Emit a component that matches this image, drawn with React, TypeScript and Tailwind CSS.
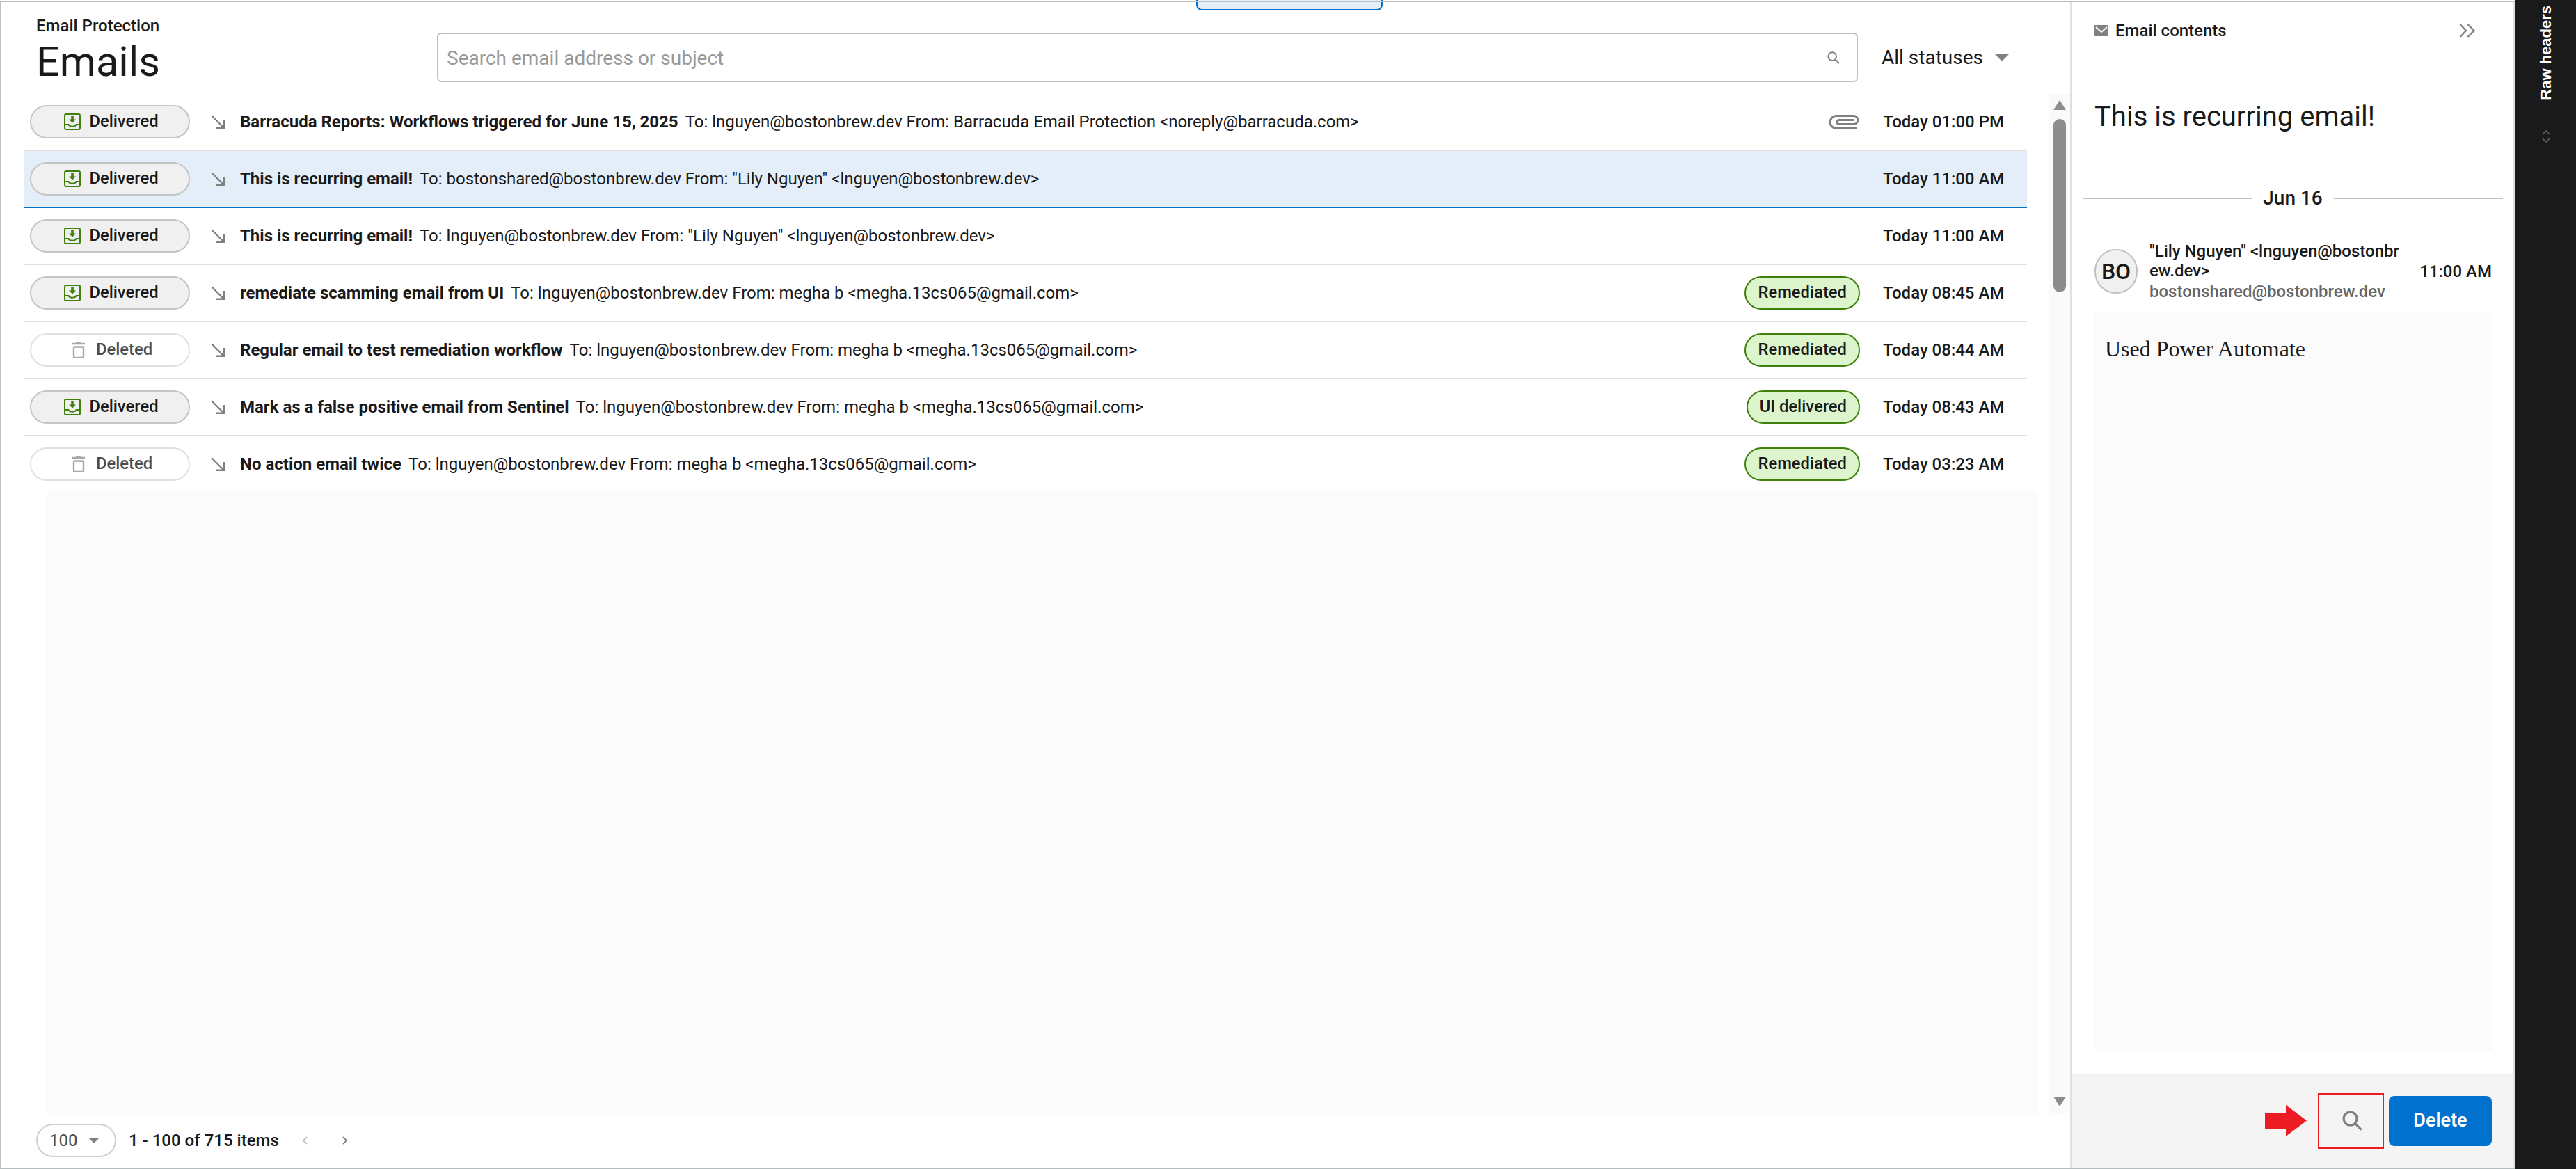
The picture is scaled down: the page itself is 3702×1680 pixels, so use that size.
const rows = [
  { status: "Delivered", subject: "Barracuda Reports: Workflows triggered for June 15, 2025", to: "lnguyen@bostonbrew.dev", from: "Barracuda Email Protection <noreply@barracuda.com>", time: "Today 01:00 PM", attachment: true },
  { status: "Delivered", subject: "This is recurring email!", to: "bostonshared@bostonbrew.dev", from: "\"Lily Nguyen\" <lnguyen@bostonbrew.dev>", time: "Today 11:00 AM", selected: true },
  { status: "Delivered", subject: "This is recurring email!", to: "lnguyen@bostonbrew.dev", from: "\"Lily Nguyen\" <lnguyen@bostonbrew.dev>", time: "Today 11:00 AM" },
  { status: "Delivered", subject: "remediate scamming email from UI", to: "lnguyen@bostonbrew.dev", from: "megha b <megha.13cs065@gmail.com>", tag: "Remediated", time: "Today 08:45 AM" },
  { status: "Deleted", subject: "Regular email to test remediation workflow", to: "lnguyen@bostonbrew.dev", from: "megha b <megha.13cs065@gmail.com>", tag: "Remediated", time: "Today 08:44 AM" },
  { status: "Delivered", subject: "Mark as a false positive email from Sentinel", to: "lnguyen@bostonbrew.dev", from: "megha b <megha.13cs065@gmail.com>", tag: "UI delivered", time: "Today 08:43 AM" },
  { status: "Deleted", subject: "No action email twice", to: "lnguyen@bostonbrew.dev", from: "megha b <megha.13cs065@gmail.com>", tag: "Remediated", time: "Today 03:23 AM" },
];

const SearchIcon = ({ className }: { className: string }) => (
  <svg viewBox="0 0 20 20" fill="none" stroke="currentColor" strokeWidth="2.2" className={className}>
    <circle cx="8" cy="8" r="6.5" />
    <path d="M12.8 12.8L19 19" />
  </svg>
);

const Caret = ({ className }: { className: string }) => (
  <svg viewBox="0 0 20 10" className={className}>
    <path d="M0 0H20L10 10Z" fill="#808080" />
  </svg>
);

const DeliveredIcon = () => (
  <svg viewBox="0 0 24 24" fill="none" className="w-6 h-6 shrink-0">
    <rect x="1" y="1" width="22" height="22" rx="2" stroke="#3f7f0b" strokeWidth="2" />
    <path d="M1 16H6.5C7.5 19.5 16.5 19.5 17.5 16H23" stroke="#3f7f0b" strokeWidth="2" />
    <path d="M10.2 4H13.8V8.5H17L12 13.5L7 8.5H10.2Z" fill="#3f7f0b" />
  </svg>
);

const TrashIcon = () => (
  <svg viewBox="0 0 18 24" fill="none" className="w-[18px] h-6 shrink-0">
    <path d="M0 3H18M5 1.5H13" stroke="#a8a8a8" strokeWidth="2.4" />
    <rect x="2" y="7.5" width="14" height="15.5" rx="1.5" stroke="#a8a8a8" strokeWidth="2.4" />
  </svg>
);

const StatusBadge = ({ status }: { status: string }) =>
  status === "Delivered" ? (
    <div className="w-[230px] h-12 shrink-0 flex items-center justify-center gap-3 rounded-full border-2 border-[#c4c4c4] bg-[#f0f0f0] pl-1 text-[#1a1a1a] text-[23.8px] font-medium">
      <DeliveredIcon />
      Delivered
    </div>
  ) : (
    <div className="w-[230px] h-12 shrink-0 flex items-center justify-center gap-4 rounded-full border-2 border-[#e0e0e0] bg-white pl-[7px] text-[#4d4d4d] text-[23.8px] font-medium">
      <TrashIcon />
      Deleted
    </div>
  );

const Row = ({ row, last }: { row: (typeof rows)[number]; last: boolean }) => (
  <div
    className={`flex items-center pl-2 pr-[33px] shrink-0 ${last ? "h-[80px]" : "h-[82px] border-b-2"} ${
      row.selected ? "bg-[#e4eef8] border-[#0072ce]" : "border-[#e0e0e0]"
    }`}
  >
    <StatusBadge status={row.status} />
    <svg viewBox="0 0 20 20" fill="none" stroke="#808080" strokeWidth="2.4" className="w-5 h-5 ml-[30px] shrink-0">
      <path d="M1 1L18 18M18.8 7V18.8H7" />
    </svg>
    <div className="ml-[22px] flex-1 min-w-0 text-[24px] text-[#1a1a1a] whitespace-pre truncate">
      <span className="font-bold">{row.subject}</span>
      <span className="ml-[10px]">To: {row.to} From: {row.from}</span>
    </div>
    {row.attachment && (
      <svg viewBox="0 0 44 21" fill="none" stroke="#808080" strokeWidth="3" className="w-11 h-[21px] mr-[34px] shrink-0">
        <path d="M40 19.5H11A9 9 0 0 1 11 1.5H36A6 6 0 0 1 36 13.5H15A3 3 0 0 1 15 7.5H37" />
      </svg>
    )}
    {row.tag && (
      <div className="h-12 mr-[33px] px-[17px] shrink-0 flex items-center justify-center rounded-full border-2 border-[#3f7f0b] bg-[#dcf5cc] text-[#1a1a1a] text-[23.8px] font-medium">
        {row.tag}
      </div>
    )}
    <div className="w-[174px] shrink-0 text-right text-[24px] font-medium text-[#1a1a1a] whitespace-nowrap">{row.time}</div>
  </div>
);

export default function App() {
  return (
    <div className="relative flex h-screen w-screen overflow-hidden bg-white font-['Roboto',sans-serif] text-[#1a1a1a]">
      {/* tab peeking in from the top, the page's top line runs over it */}
      <div className="absolute left-[1719px] top-0 w-[268px] h-[15px] rounded-b-[8px] border-2 border-t-0 border-[#0072ce] bg-[#e4eef8]" />
      <div className="relative z-10 w-[3615px] shrink-0 pt-px">
        <div className="flex h-full border-t-2 border-b-2 border-t-[#c0c0c0] border-b-[#b4bcbc]">
          <div className="w-[2975px] shrink-0 flex flex-col border-l-2 border-[#c0c0c0]">
            <header className="h-[132px] shrink-0 flex items-start pl-[50px]">
              <div className="w-[576px] shrink-0 pt-[21px]">
                <div className="text-[24px] leading-[26px] font-medium">Email Protection</div>
                <div className="mt-1 text-[59.5px] leading-[70px] font-normal">Emails</div>
              </div>
              <div className="mt-11 w-[2042px] h-[71px] shrink-0 flex items-center justify-between rounded-[6px] border-2 border-[#c0c0c0] pl-3 pr-6 text-[28px] text-[#999999]">
                <span className="pt-0.5">Search email address or subject</span>
                <SearchIcon className="w-[18px] h-[18px] text-[#808080]" />
              </div>
              <div className="ml-[34px] mt-11 h-[72px] flex items-center text-[28px]">
                All statuses
                <Caret className="ml-[17px] w-5 h-[10px]" />
              </div>
            </header>
            <div className="flex-1 min-h-0 flex pl-[33px]">
              <div className="w-[2910px] shrink-0 flex flex-col">
                <div className="w-[2878px] flex flex-col">
                  {rows.map((row, i) => (
                    <Row key={i} row={row} last={i === rows.length - 1} />
                  ))}
                </div>
                <div className="ml-8 w-[2861px] flex-1 -mt-px bg-[#fbfbfb]" />
                <div className="h-[75px] shrink-0 flex items-center pb-[3px]">
                  <div className="ml-[17px] w-[115px] h-12 flex items-center rounded-full border-2 border-[#d0d0d0] pl-[17px] text-[24px] text-[#4d4d4d]">
                    100
                    <Caret className="ml-[17px] w-[14px] h-[7px]" />
                  </div>
                  <span className="ml-[18px] text-[24px] font-medium">1 - 100 of 715 items</span>
                  <svg viewBox="0 0 8 12" fill="none" stroke="#c0c0c0" strokeWidth="1.8" className="ml-[33px] w-2 h-3">
                    <path d="M7 1L2 6L7 11" />
                  </svg>
                  <svg viewBox="0 0 8 12" fill="none" stroke="#808080" strokeWidth="1.8" className="ml-[50px] w-2 h-3">
                    <path d="M1 1L6 6L1 11" />
                  </svg>
                </div>
              </div>
              <div className="w-[30px] shrink-0 mb-[79px] bg-[#fafafa] flex flex-col items-center pt-[9px] pb-[9px]">
                <svg viewBox="0 0 18 14" className="w-[18px] h-[14px] shrink-0">
                  <path d="M9 0L18 14H0Z" fill="#8c8c8c" />
                </svg>
                <div className="mt-[13px] w-[18px] h-[249px] rounded-full bg-[#8c8c8c]" />
                <svg viewBox="0 0 18 14" className="mt-auto w-[18px] h-[14px] shrink-0">
                  <path d="M0 0H18L9 14Z" fill="#8c8c8c" />
                </svg>
              </div>
            </div>
          </div>

          <div className="w-[640px] shrink-0 flex flex-col border-l-2 border-r-[3px] border-[#e0e0e0]">
            <div className="flex items-center pl-[33px] pr-[54px] pt-[28px]">
              <svg viewBox="0 0 20 16" className="w-5 h-4 shrink-0">
                <rect width="20" height="16" rx="1" fill="#808080" />
                <path d="M2 3L10 10L18 3" fill="none" stroke="#ffffff" strokeWidth="1.8" />
              </svg>
              <span className="ml-[10px] text-[24px] leading-[26px] font-medium">Email contents</span>
              <svg viewBox="0 0 24 20" fill="none" stroke="#808080" strokeWidth="2.4" className="ml-auto w-6 h-5">
                <path d="M1.5 1L10 10L1.5 19M12.5 1L21.5 10L12.5 19" />
              </svg>
            </div>
            <div className="mt-[87px] pl-[33px] text-[40px] leading-[48px]">This is recurring email!</div>
            <div className="mt-[77px] flex items-center gap-[16px] pl-[16px] pr-[15px]">
              <div className="flex-1 h-0.5 bg-[#c0c0c0]" />
              <span className="text-[28px] leading-[32px] font-medium">Jun 16</span>
              <div className="flex-1 h-0.5 bg-[#c0c0c0]" />
            </div>
            <div className="mt-[46px] flex items-center pl-[33px] pr-[31px]">
              <div className="w-[62px] h-16 shrink-0 flex items-center justify-center rounded-full border-2 border-[#c0c0c0] bg-[#f0f0f0] text-[32px] font-medium">
                BO
              </div>
              <div className="ml-[17px] w-[365px] text-[24px] leading-[28px] font-medium break-all">
                <div>"Lily Nguyen" &lt;lnguyen@bostonbrew.dev&gt;</div>
                <div className="mt-[2px] text-[#666666]">bostonshared@bostonbrew.dev</div>
              </div>
              <div className="ml-auto text-[24px] font-medium whitespace-nowrap">11:00 AM</div>
            </div>
            <div className="ml-[33px] mr-[31px] mt-[17px] flex-1 bg-[#fbfbfb] pl-[15px] pt-[33px] font-['Liberation_Serif',serif] text-[32px] leading-[36px]">
              Used Power Automate
            </div>
            <div className="mt-8 h-[135px] shrink-0 bg-[#f4f4f4] flex items-center justify-end pr-[31px] gap-[7px]">
              <svg viewBox="0 0 60 45" className="mr-[9px] w-[60px] h-[45px]">
                <path d="M0 11H30V0L60 22.5L30 45V34H0Z" fill="#ed1c24" />
              </svg>
              <div className="w-[95px] h-[80px] flex items-center justify-center border-2 border-[#ed1c24] pl-[3px]">
                <SearchIcon className="w-[29px] h-[29px] text-[#808080]" />
              </div>
              <div className="w-[148px] h-[72px] flex items-center justify-center rounded-[8px] bg-[#0072ce] text-white text-[27px] font-semibold">
                Delete
              </div>
            </div>
          </div>
        </div>
      </div>

      <div className="flex-1 bg-[#1a1a1a] flex flex-col items-center pt-2">
        <div className="[writing-mode:vertical-rl] rotate-180 font-['Liberation_Sans',sans-serif] font-bold text-[22px] leading-[26px] text-white">
          Raw headers
        </div>
        <svg viewBox="0 0 12 18" fill="none" stroke="#666666" strokeWidth="1.6" className="mt-[43px] w-3 h-[18px]">
          <path d="M1 6L6 1L11 6M1 12L6 17L11 12" />
        </svg>
      </div>
    </div>
  );
}
